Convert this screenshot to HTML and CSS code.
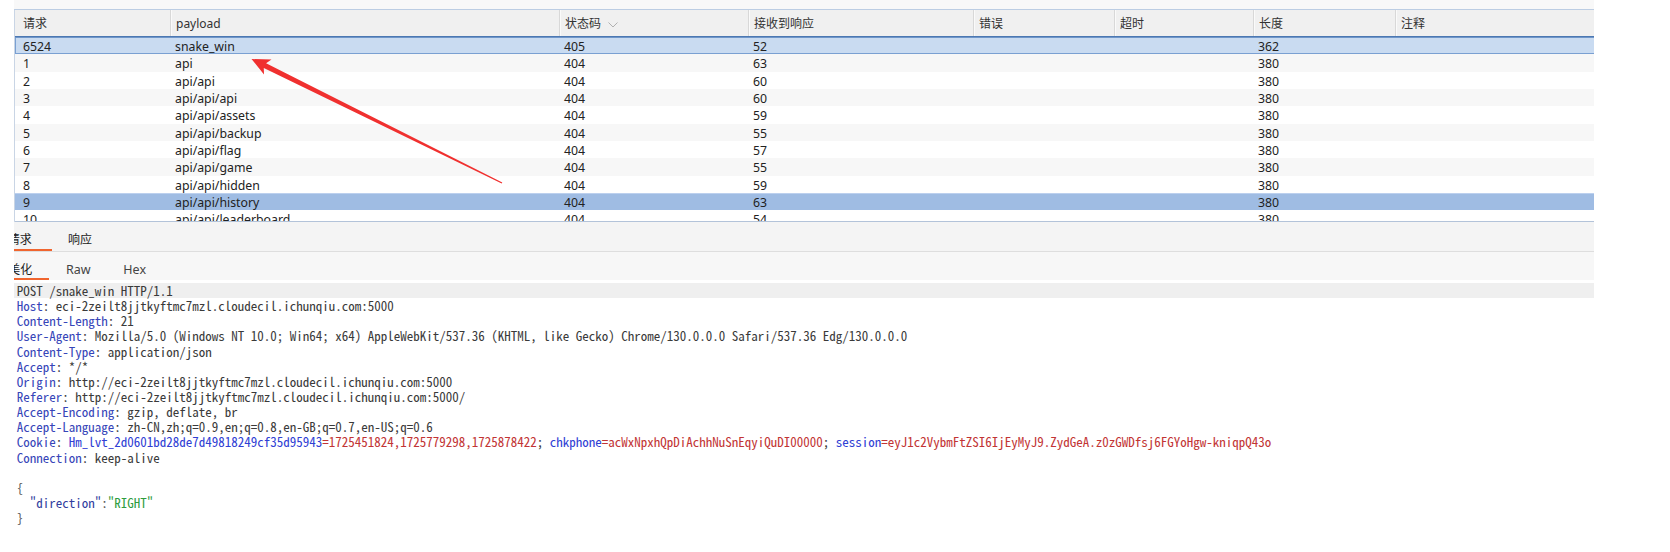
FILE: index.html
```html
<!DOCTYPE html>
<html lang="zh-CN">
<head>
<meta charset="utf-8">
<title>Intruder</title>
<link rel="stylesheet" href="styles.css">
</head>
<body>
<div class="app">
  <div class="topband"></div>
  <div class="table">
    <div class="row thead">
      <div class="cell first">请求</div>
      <div class="cell">payload</div>
      <div class="cell">状态码<svg class="chev" width="10" height="6" viewBox="0 0 10 6"><path d="M0.5 0.5 L5 5 L9.5 0.5" fill="none" stroke="#b0b0b0" stroke-width="1"/></svg></div>
      <div class="cell">接收到响应</div>
      <div class="cell">错误</div>
      <div class="cell">超时</div>
      <div class="cell">长度</div>
      <div class="cell">注释</div>
    </div>
    <div class="tbody">
      <div class="row sel1"><div class="cell first">6524</div><div class="cell">snake_win</div><div class="cell">405</div><div class="cell">52</div><div class="cell"></div><div class="cell"></div><div class="cell">362</div><div class="cell"></div></div>
      <div class="row odd"><div class="cell first">1</div><div class="cell">api</div><div class="cell">404</div><div class="cell">63</div><div class="cell"></div><div class="cell"></div><div class="cell">380</div><div class="cell"></div></div>
      <div class="row"><div class="cell first">2</div><div class="cell">api/api</div><div class="cell">404</div><div class="cell">60</div><div class="cell"></div><div class="cell"></div><div class="cell">380</div><div class="cell"></div></div>
      <div class="row odd"><div class="cell first">3</div><div class="cell">api/api/api</div><div class="cell">404</div><div class="cell">60</div><div class="cell"></div><div class="cell"></div><div class="cell">380</div><div class="cell"></div></div>
      <div class="row"><div class="cell first">4</div><div class="cell">api/api/assets</div><div class="cell">404</div><div class="cell">59</div><div class="cell"></div><div class="cell"></div><div class="cell">380</div><div class="cell"></div></div>
      <div class="row odd"><div class="cell first">5</div><div class="cell">api/api/backup</div><div class="cell">404</div><div class="cell">55</div><div class="cell"></div><div class="cell"></div><div class="cell">380</div><div class="cell"></div></div>
      <div class="row"><div class="cell first">6</div><div class="cell">api/api/flag</div><div class="cell">404</div><div class="cell">57</div><div class="cell"></div><div class="cell"></div><div class="cell">380</div><div class="cell"></div></div>
      <div class="row odd"><div class="cell first">7</div><div class="cell">api/api/game</div><div class="cell">404</div><div class="cell">55</div><div class="cell"></div><div class="cell"></div><div class="cell">380</div><div class="cell"></div></div>
      <div class="row"><div class="cell first">8</div><div class="cell">api/api/hidden</div><div class="cell">404</div><div class="cell">59</div><div class="cell"></div><div class="cell"></div><div class="cell">380</div><div class="cell"></div></div>
      <div class="row sel2"><div class="cell first">9</div><div class="cell">api/api/history</div><div class="cell">404</div><div class="cell">63</div><div class="cell"></div><div class="cell"></div><div class="cell">380</div><div class="cell"></div></div>
      <div class="row"><div class="cell first">10</div><div class="cell">api/api/leaderboard</div><div class="cell">404</div><div class="cell">54</div><div class="cell"></div><div class="cell"></div><div class="cell">380</div><div class="cell"></div></div>
    </div>
  </div>
  <div class="tabs">
    <div class="tab active t1">请求</div>
    <div class="tab t2">响应</div>
  </div>
  <div class="subtabs">
    <div class="stab active s1">美化</div>
    <div class="stab s2">Raw</div>
    <div class="stab s3">Hex</div>
  </div>
  <div class="code">
    <div class="ln cur">POST /snake_win HTTP/1.1</div>
    <div class="ln"><span class="hn">Host</span>: eci-2zeilt8jjtkyftmc7mzl.cloudecil.ichunqiu.com:5000</div>
    <div class="ln"><span class="hn">Content-Length</span>: 21</div>
    <div class="ln"><span class="hn">User-Agent</span>: Mozilla/5.0 (Windows NT 10.0; Win64; x64) AppleWebKit/537.36 (KHTML, like Gecko) Chrome/130.0.0.0 Safari/537.36 Edg/130.0.0.0</div>
    <div class="ln"><span class="hn">Content-Type</span>: application/json</div>
    <div class="ln"><span class="hn">Accept</span>: */*</div>
    <div class="ln"><span class="hn">Origin</span>: http://eci-2zeilt8jjtkyftmc7mzl.cloudecil.ichunqiu.com:5000</div>
    <div class="ln"><span class="hn">Referer</span>: http://eci-2zeilt8jjtkyftmc7mzl.cloudecil.ichunqiu.com:5000/</div>
    <div class="ln"><span class="hn">Accept-Encoding</span>: gzip, deflate, br</div>
    <div class="ln"><span class="hn">Accept-Language</span>: zh-CN,zh;q=0.9,en;q=0.8,en-GB;q=0.7,en-US;q=0.6</div>
    <div class="ln"><span class="hn">Cookie</span>: <span class="ck">Hm_lvt_2d0601bd28de7d49818249cf35d95943</span><span class="cv">=1725451824,1725779298,1725878422</span>; <span class="ck">chkphone</span><span class="cv">=acWxNpxhQpDiAchhNuSnEqyiQuDI00000</span>; <span class="ck">session</span><span class="cv">=eyJ1c2VybmFtZSI6IjEyMyJ9.ZydGeA.z0zGWDfsj6FGYoHgw-kniqpQ43o</span></div>
    <div class="ln"><span class="hn">Connection</span>: keep-alive</div>
    <div class="ln"> </div>
    <div class="ln jb">{</div>
    <div class="ln jb">  <span class="jk">"direction"</span>:<span class="jv">"RIGHT"</span></div>
    <div class="ln jb">}</div>
  </div>
</div>
<svg class="arrow" width="1670" height="552" viewBox="0 0 1670 552">
  <polygon points="251.5,59 271.5,59.6 266.1,63.3 502.3,182.5 501.7,183.5 263.8,67.9 264,74.6" fill="#f0302f"/>
</svg>
</body>
</html>
```

FILE: styles.css
```css
html, body {
  margin: 0;
  padding: 0;
  background: #ffffff;
}
body {
  width: 1670px;
  height: 552px;
  overflow: hidden;
  position: relative;
  font-family: "Noto Sans", "Noto Sans CJK SC", sans-serif;
  color: #222;
}
.app {
  margin-left: 14px;
  width: 1580px;
}
.topband {
  height: 9px;
  background: #f8f8f8;
  border-bottom: 1px solid #bccde3;
}
.table {
  border-left: 1px solid #c9d5e5;
}
.row {
  display: grid;
  grid-template-columns: 155px 389px 189px 225px 141px 139px 142px 199px;
  height: 17.33px;
  box-sizing: border-box;
  font-size: 12.3px;
  line-height: 16px;
}
.cell {
  padding: 2px 0 0 5px;
  white-space: nowrap;
}
.cell.first {
  padding-left: 8px;
}
.thead {
  height: 27px;
  background: #f0f0f0;
  border-bottom: 1px solid #4c78b2;
  font-size: 12px;
  color: #333;
}
.thead .cell {
  line-height: 22px;
  padding-top: 3px;
  display: flex;
  align-items: flex-start;
}
.thead .cell + .cell {
  border-left: 1px solid #d8d8d8;
  box-shadow: inset 1px 0 0 #fafafa;
}
.chev {
  margin: 9px 0 0 7px;
  flex: none;
}
.tbody {
  height: 184px;
  overflow: hidden;
  border-bottom: 1px solid #b3c3d9;
}
.row.odd {
  background: #f7f7f7;
}
.row.sel1 {
  background: #c9dbf1;
  border-top: 1px solid #6f96c9;
  border-bottom: 1px solid #7aa0d2;
  box-shadow: inset 1px 0 0 #7aa0d2;
}
.row.sel1 .cell {
  padding-top: 0.5px;
}
.row.sel2 {
  background: #9fbce3;
  border-top: 1px solid #bcd0ee;
}
.row.sel2 .cell {
  padding-top: 1px;
}
.tabs {
  height: 29px;
  background: #f4f4f4;
  border-bottom: 1px solid #dedede;
  display: flex;
  overflow: hidden;
  font-size: 12px;
  color: #222;
}
.tab {
  box-sizing: border-box;
  height: 29px;
  padding-top: 10px;
  line-height: 16px;
  white-space: nowrap;
}
.tab.active {
  border-bottom: 2px solid #f0652f;
}
.tab.t1 {
  margin-left: -6.3px;
  padding-right: 20px;
}
.tab.t2 {
  margin-left: 16.3px;
}
.subtabs {
  height: 28px;
  background: #f7f7f7;
  display: flex;
  overflow: hidden;
  font-size: 12.5px;
  color: #444;
}
.stab {
  box-sizing: border-box;
  height: 28px;
  padding-top: 10px;
  line-height: 16px;
  white-space: nowrap;
}
.stab.active {
  border-bottom: 2px solid #f0652f;
  color: #222;
}
.stab.s1 {
  margin-left: -5.7px;
  padding-right: 17px;
  font-size: 12px;
}
.stab.s2 {
  margin-left: 16.7px;
}
.stab.s3 {
  margin-left: 32.7px;
}
.code {
  padding-top: 3px;
  font-family: "Noto Sans Mono CJK SC", "Liberation Mono", monospace;
  font-size: 13px;
  color: #3a3a3a;
}
.ln {
  height: 15.15px;
  line-height: 15.15px;
  white-space: pre;
  padding-left: 2.7px;
}
.ln.cur {
  background: #efefef;
}
.hn {
  color: #3645b8;
}
.ck {
  color: #2f40d4;
}
.cv {
  color: #c23434;
}
.jb {
  color: #555;
}
.jk {
  color: #313e9e;
}
.jv {
  color: #2e9c3e;
}
.arrow {
  position: absolute;
  left: 0;
  top: 0;
  pointer-events: none;
}
```
